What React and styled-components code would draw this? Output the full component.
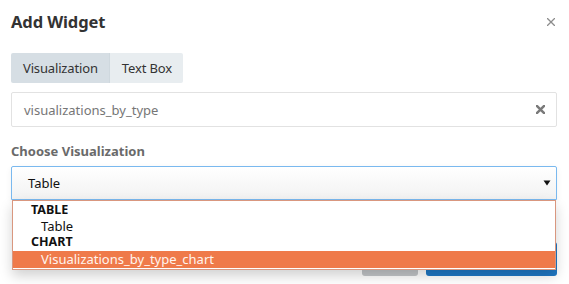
import React from "react";
import styled, { createGlobalStyle } from "styled-components";

const GlobalStyle = createGlobalStyle`
  html, body { margin: 0; padding: 0; background: #fff; }
  body { font-family: "Noto Sans", "Open Sans", sans-serif; color: #333; }
  * { box-sizing: border-box; }
`;

const Modal = styled.div`
  width: 569px;
  padding: 0 12px 0 11px;
`;

const Header = styled.div`
  display: flex;
  justify-content: space-between;
  align-items: center;
  height: 41px;
  padding-top: 2px;
`;

const Title = styled.h4`
  margin: 0;
  font-size: 16.5px;
  font-weight: 700;
  color: #333;
  letter-spacing: -0.1px;
`;

const CloseBtn = styled.button`
  border: 0;
  background: none;
  padding: 0;
  margin-right: 2px;
  width: 8px;
  height: 8px;
  display: flex;
  cursor: pointer;
`;

const Tabs = styled.div`
  display: inline-flex;
  margin-top: 12px;
  border-radius: 2px;
  overflow: hidden;
`;

const Tab = styled.div`
  height: 30px;
  display: flex;
  align-items: center;
  padding: 0 11px 0 12px;
  font-size: 13px;
  letter-spacing: -0.15px;
  color: #333;
  background: ${(p) => (p.$active ? "#d6dee4" : "#e8edf0")};
  border-right: ${(p) => (p.$active ? "1px solid #cfd8de" : "0")};
`;

const SearchBox = styled.div`
  margin-top: 9px;
  height: 35px;
  border: 1px solid #e2e2e2;
  border-radius: 2px;
  display: flex;
  align-items: center;
  justify-content: space-between;
  padding: 0 11px 0 12px;
  font-size: 13px;
  color: #767676;
`;

const Label = styled.div`
  margin-top: 14px;
  line-height: 20px;
  font-size: 13px;
  font-weight: 700;
  color: #6a6a6a;
`;

const SelectWrap = styled.div`
  position: relative;
  margin-top: 5px;
`;

const SelectBox = styled.div`
  height: 34px;
  border: 1px solid #7ab9ef;
  border-radius: 2px 2px 0 0;
  background: linear-gradient(#ffffff, #f2f2f2);
  display: flex;
  align-items: center;
  justify-content: space-between;
  padding: 0 5px 0 16px;
  font-size: 13px;
  color: #111;
  box-shadow: 0 2px 6px rgba(0, 0, 0, 0.06);
`;

const Dropdown = styled.div`
  position: absolute;
  top: 100%;
  left: 1px;
  right: 1px;
  background: #fff;
  border: 1px solid #d9977f;
  padding: 1px 0 1px;
  box-shadow: 0 6px 12px rgba(0, 0, 0, 0.18);
  z-index: 2;
`;

const GroupHeader = styled.div`
  height: 16px;
  line-height: 16px;
  padding-left: 18px;
  font-size: 12.5px;
  font-weight: 700;
  color: #111;
  overflow: hidden;
`;

const Option = styled.div`
  height: ${(p) => (p.$highlight ? "17px" : "16px")};
  line-height: ${(p) => (p.$highlight ? "17px" : "16px")};
  margin-top: ${(p) => (p.$highlight ? "1px" : "0")};
  padding-left: 28px;
  font-size: 13px;
  color: ${(p) => (p.$highlight ? "#fff4ee" : "#111")};
  background: ${(p) => (p.$highlight ? "#ef7a4a" : "transparent")};
  overflow: hidden;
`;

const Footer = styled.div`
  display: flex;
  justify-content: flex-end;
  gap: 8px;
  margin-top: 42px;
  padding-bottom: 20px;
`;

const Button = styled.div`
  height: 34px;
  border-radius: 3px;
  width: ${(p) => p.$w}px;
  background: ${(p) => (p.$primary ? "#1f78c5" : "#c3c6c9")};
`;

const XIcon = ({ size = 8, stroke = "#8c8c8c", width = 1.3 }) => (
  <svg width={size} height={size} viewBox="0 0 8 8">
    <path d="M0.5 0.5 L7.5 7.5 M7.5 0.5 L0.5 7.5" stroke={stroke} strokeWidth={width} strokeLinecap="square" />
  </svg>
);

const Arrow = () => (
  <svg width="8" height="6" viewBox="0 0 8 6">
    <path d="M0.5 0.5 H7.5 L4 5.5 Z" fill="#111" />
  </svg>
);

export default function App() {
  return (
    <>
      <GlobalStyle />
      <Modal>
        <Header>
          <Title>Add Widget</Title>
          <CloseBtn aria-label="Close">
            <XIcon />
          </CloseBtn>
        </Header>
        <Tabs>
          <Tab $active>Visualization</Tab>
          <Tab>Text Box</Tab>
        </Tabs>
        <SearchBox>
          <span>visualizations_by_type</span>
          <XIcon size={9} stroke="#7a7a7a" width={2.2} />
        </SearchBox>
        <Label>Choose Visualization</Label>
        <SelectWrap>
          <SelectBox>
            <span>Table</span>
            <Arrow />
          </SelectBox>
          <Dropdown>
            <GroupHeader>TABLE</GroupHeader>
            <Option>Table</Option>
            <GroupHeader>CHART</GroupHeader>
            <Option $highlight>Visualizations_by_type_chart</Option>
          </Dropdown>
        </SelectWrap>
        <Footer>
          <Button $w={56} />
          <Button $primary $w={131} />
        </Footer>
      </Modal>
    </>
  );
}
